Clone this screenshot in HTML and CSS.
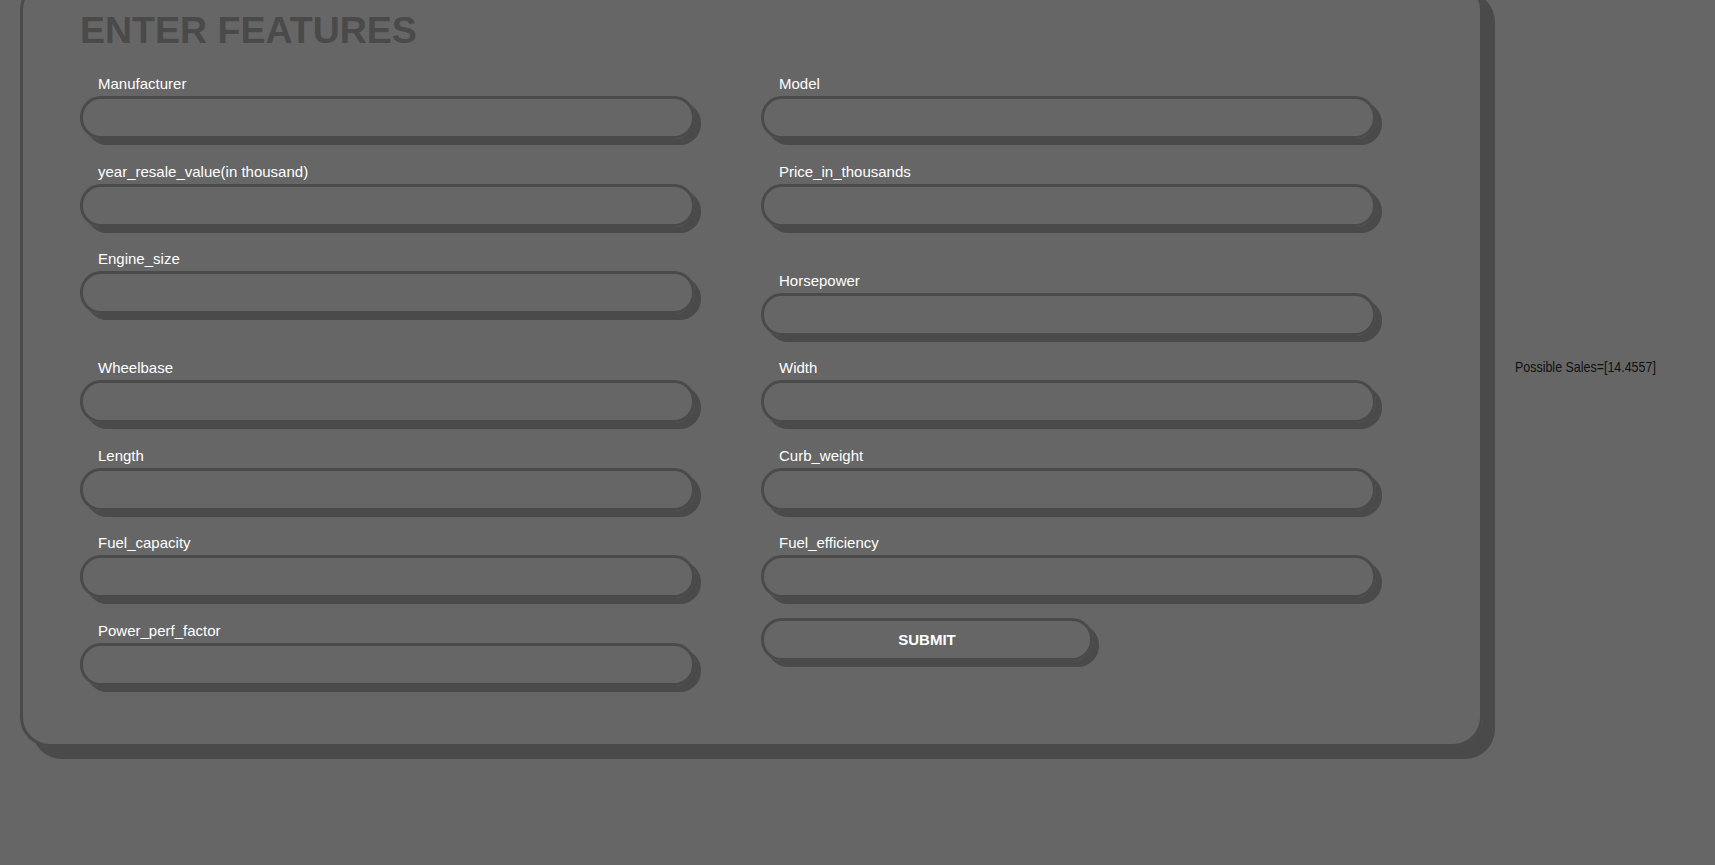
FILE: index.html
```html
<!DOCTYPE html>
<html lang="en">
<head>
<meta charset="utf-8">
<title>Enter Features</title>
<link rel="stylesheet" href="styles.css">
</head>
<body>
<div class="page">
  <div class="card">
    <h1 class="title">ENTER FEATURES</h1>
    <form class="grid">
      <div class="field"><label class="label">Manufacturer</label><input class="input" type="text"></div>
      <div class="field"><label class="label">Model</label><input class="input" type="text"></div>
      <div class="field"><label class="label">year_resale_value(in thousand)</label><input class="input" type="text"></div>
      <div class="field"><label class="label">Price_in_thousands</label><input class="input" type="text"></div>
      <div class="field"><label class="label">Engine_size</label><input class="input" type="text"></div>
      <div class="field field-drop"><label class="label">Horsepower</label><input class="input" type="text"></div>
      <div class="field"><label class="label">Wheelbase</label><input class="input" type="text"></div>
      <div class="field"><label class="label">Width</label><input class="input" type="text"></div>
      <div class="field"><label class="label">Length</label><input class="input" type="text"></div>
      <div class="field"><label class="label">Curb_weight</label><input class="input" type="text"></div>
      <div class="field"><label class="label">Fuel_capacity</label><input class="input" type="text"></div>
      <div class="field"><label class="label">Fuel_efficiency</label><input class="input" type="text"></div>
      <div class="field"><label class="label">Power_perf_factor</label><input class="input" type="text"></div>
      <div class="field field-submit"><button class="submit" type="button">SUBMIT</button></div>
    </form>
  </div>
  <p class="result">Possible Sales=[14.4557]</p>
</div>
</body>
</html>
```
FILE: styles.css
```css
* {
  box-sizing: border-box;
}

html {
  min-height: 100%;
  background: #666666;
}

body {
  margin: 0;
  padding-bottom: 40px;
  background: #666666;
  font-family: "Liberation Sans", Arial, sans-serif;
}

.page {
  display: flex;
  align-items: center;
}

.card {
  flex: none;
  width: 1463px;
  margin: -20px 0 0 20px;
  padding: 26px 0 34px 57px;
  border: 3px solid #4a4a4a;
  border-radius: 30px;
  box-shadow: 12px 12px 0 #4a4a4a;
}

.title {
  margin: 0;
  font-size: 37.5px;
  line-height: 42px;
  font-weight: bold;
  color: #4a4a4a;
}

.grid {
  display: grid;
  grid-template-columns: 615px 615px;
  column-gap: 66px;
  align-items: start;
  margin: 24px 0 0;
}

.field {
  margin-bottom: 23.67px;
}

.field-drop {
  margin-top: 22px;
  margin-bottom: 22.67px;
}

.label {
  display: block;
  padding-left: 18px;
  margin-bottom: 4px;
  font-size: 15px;
  line-height: 17px;
  color: #ffffff;
}

.input {
  display: block;
  width: 100%;
  height: 43px;
  margin: 0;
  padding: 0 18px;
  border: 3px solid #4a4a4a;
  border-radius: 21px;
  background: transparent;
  box-shadow: 6px 6px 0 #4a4a4a;
  color: #ffffff;
  font: 15px "Liberation Sans", Arial, sans-serif;
  outline: none;
}

.field-submit {
  margin-top: -4px;
}

.submit {
  display: block;
  width: 332px;
  height: 43px;
  margin: 0;
  padding: 0;
  border: 3px solid #4a4a4a;
  border-radius: 21px;
  background: transparent;
  box-shadow: 6px 6px 0 #4a4a4a;
  color: #ffffff;
  font: bold 15px "Liberation Sans", Arial, sans-serif;
  text-align: center;
  cursor: pointer;
}

.result {
  flex: none;
  margin: 0 0 13px 32px;
  font-size: 15px;
  line-height: 17px;
  color: #111111;
  white-space: nowrap;
  transform: scaleX(0.83);
  transform-origin: left center;
}
```
